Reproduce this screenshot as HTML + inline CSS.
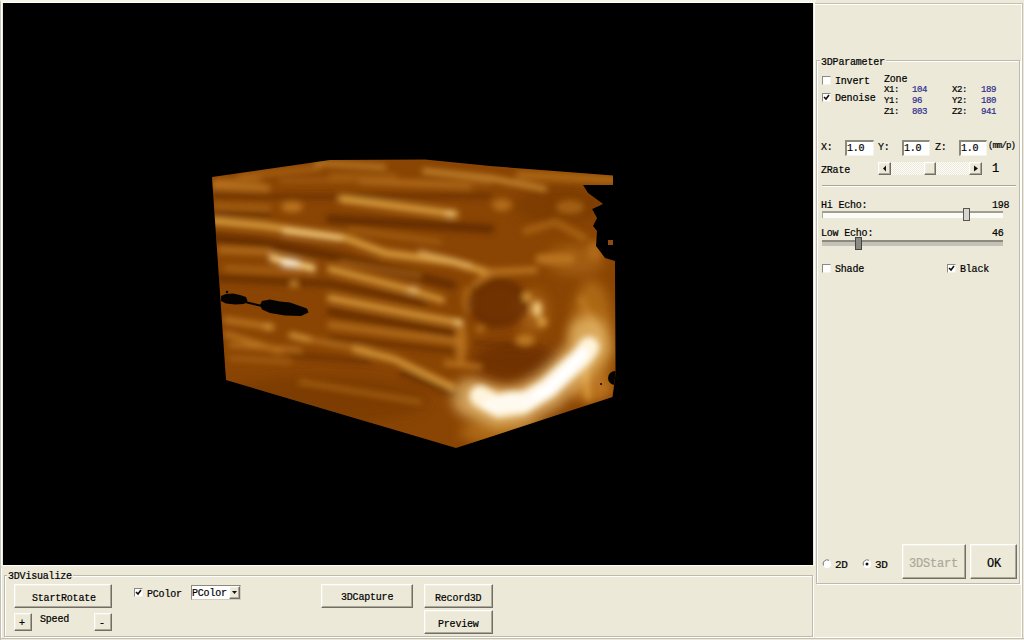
<!DOCTYPE html>
<html><head><meta charset="utf-8">
<style>
*{box-sizing:border-box}
html,body{margin:0;padding:0;width:1024px;height:640px;overflow:hidden;background:#ece9d8}
body{position:relative;font-family:"Liberation Mono",monospace;color:#000}
.t,.s{-webkit-text-stroke:0.2px currentColor}
.a{position:absolute}
.t{position:absolute;font-size:10px;line-height:10px;letter-spacing:-0.2px;white-space:pre}
.s{position:absolute;font-size:9px;line-height:9px;letter-spacing:-0.4px;white-space:pre}
.v{color:#2c2c8c}
.m{font-size:12px;line-height:12px;letter-spacing:-0.2px}
.btn{position:absolute;background:#ece9d8;border-top:1px solid #fff;border-left:1px solid #fff;border-right:1px solid #716f64;border-bottom:1px solid #716f64;box-shadow:inset -1px -1px 0 #aca899, inset 1px 1px 0 #f1efe2}
.gb{position:absolute;border:1px solid #d0d0bf;box-shadow:1px 1px 0 #fff inset,1px 1px 0 #fff}
.cb{position:absolute;width:9px;height:9px;background:#fff;border-top:1px solid #8a8a80;border-left:1px solid #8a8a80;border-right:1px solid #f4f2e8;border-bottom:1px solid #f4f2e8}
.edit{position:absolute;background:#fff;border-top:2px solid #8c8a7c;border-left:2px solid #8c8a7c;border-right:1px solid #f4f3ee;border-bottom:1px solid #f4f3ee}
.lbl{position:absolute;background:#ece9d8;padding:0 1px}
</style></head><body>

<!-- viewport -->
<div class="a" style="left:0;top:0;width:816px;height:568px;border-top:2px solid #f6f4e8;border-left:1px solid #c8c5b6"></div>
<div class="a" style="left:1px;top:2px;width:814px;height:564px;border-left:1px solid #fff;border-right:1px solid #fff;border-bottom:1px solid #fff;border-top:1px solid #fff"></div>
<div class="a" id="vp" style="left:3px;top:3px;width:810px;height:562px;background:#000;overflow:hidden">
<svg width="810" height="562" viewBox="3 3 810 562" style="position:absolute;left:0;top:0">
  <defs>
    <clipPath id="cube">
      <polygon points="212,177 330,160 425,159.5 490,166 613,175.5 613,185 583,185 588,193 603,204 592,209 597,218 593,226 597,231 596,246 605,258 615,261 615.5,374 612.5,397 456,448 226,380"/>
    </clipPath>
    <filter id="b25" x="-50%" y="-50%" width="200%" height="200%"><feGaussianBlur stdDeviation="3"/></filter>
    <filter id="b3" x="-50%" y="-50%" width="200%" height="200%"><feGaussianBlur stdDeviation="3"/></filter>
    <filter id="b6" x="-50%" y="-50%" width="200%" height="200%"><feGaussianBlur stdDeviation="6"/></filter>
  </defs>
  <g clip-path="url(#cube)">
    <rect x="200" y="150" width="430" height="310" fill="#8a4504"/>
    <g filter="url(#b6)"><ellipse cx="515" cy="362" rx="44" ry="19" fill="#5f2800" opacity="0.6"/><ellipse cx="533" cy="312" rx="16" ry="22" fill="#bc7620" opacity="0.5"/><ellipse cx="592" cy="340" rx="22" ry="60" fill="#bc7620" opacity="0.7"/><ellipse cx="592" cy="388" rx="22" ry="14" fill="#bc7620" opacity="0.9"/><ellipse cx="505" cy="432" rx="45" ry="14" fill="#bc7620" opacity="0.7"/><ellipse cx="320" cy="400" rx="110" ry="24" fill="#743502" opacity="0.6"/><ellipse cx="560" cy="205" rx="45" ry="18" fill="#743502" opacity="0.6"/><ellipse cx="575" cy="260" rx="30" ry="15" fill="#bc7620" opacity="0.5"/></g>
    <g filter="url(#b25)" stroke-linecap="round" fill="none"><path d="M316 163 L385 167" stroke="#d89c3c" stroke-width="3"/><path d="M240 176 L320 168" stroke="#bc7620" stroke-width="3"/><path d="M280 181 L350 180" stroke="#bc7620" stroke-width="2"/><path d="M214 181 L260 180" stroke="#bc7620" stroke-width="3"/><path d="M424 171 L490 178 L545 189" stroke="#d89c3c" stroke-width="4"/><path d="M330 175 L397 176" stroke="#bc7620" stroke-width="2"/><path d="M330 180 L490 183" stroke="#bc7620" stroke-width="2"/><path d="M520 175 L613 180" stroke="#bc7620" stroke-width="8" opacity="0.7"/><path d="M214 186 L267 188" stroke="#bc7620" stroke-width="6"/><path d="M214 195 L300 197 L490 196" stroke="#5f2800" stroke-width="4" opacity="0.85"/><path d="M214 213 L270 215" stroke="#5f2800" stroke-width="4" opacity="0.85"/><path d="M330 219 L490 229" stroke="#5f2800" stroke-width="9" opacity="0.85"/><path d="M214 238 L265 243 L330 255 L452 285" stroke="#5f2800" stroke-width="9" opacity="0.85"/><path d="M214 278 L330 284 L424 303" stroke="#5f2800" stroke-width="6" opacity="0.85"/><path d="M330 312 L455 334" stroke="#5f2800" stroke-width="7" opacity="0.85"/><path d="M330 338 L460 352" stroke="#5f2800" stroke-width="4" opacity="0.85"/><path d="M290 355 L370 362" stroke="#5f2800" stroke-width="4" opacity="0.85"/><path d="M402 373 L460 396" stroke="#5f2800" stroke-width="6" opacity="0.85"/><path d="M475 343 L526 347" stroke="#5f2800" stroke-width="3" opacity="0.85"/><path d="M360 182 L470 187" stroke="#bc7620" stroke-width="3"/><path d="M214 206 L270 208" stroke="#bc7620" stroke-width="3"/><path d="M350 230 L440 242" stroke="#bc7620" stroke-width="3" opacity="0.8"/><path d="M226 268 L300 272" stroke="#bc7620" stroke-width="3"/><path d="M340 262 L420 276" stroke="#bc7620" stroke-width="3" opacity="0.8"/><path d="M230 345 L300 350" stroke="#bc7620" stroke-width="4"/><path d="M300 382 L420 402" stroke="#bc7620" stroke-width="4" opacity="0.7"/><path d="M230 358 L290 362" stroke="#bc7620" stroke-width="3" opacity="0.8"/><ellipse cx="292" cy="207" rx="11" ry="5" fill="#bc7620"/><path d="M342 199 L455 214" stroke="#d89c3c" stroke-width="7"/><path d="M214 221 L265 226 L345 238 L385 253 L452 262 L490 273" stroke="#d89c3c" stroke-width="7"/><path d="M285 231 L340 238" stroke="#f0c87c" stroke-width="6"/><path d="M420 252 L470 265" stroke="#f0c87c" stroke-width="4" opacity="0.7"/><path d="M220 250 L270 252" stroke="#bc7620" stroke-width="5"/><path d="M330 269 L411 290 L442 300" stroke="#d89c3c" stroke-width="6"/><ellipse cx="294" cy="284" rx="3" ry="3" fill="#d89c3c"/><path d="M330 298 L417 315 L461 323" stroke="#d89c3c" stroke-width="6"/><path d="M330 325 L460 342" stroke="#bc7620" stroke-width="5"/><path d="M226 320 L272 327" stroke="#bc7620" stroke-width="6"/><path d="M226 334 L280 351" stroke="#bc7620" stroke-width="5"/><path d="M291 335 L311 340" stroke="#d89c3c" stroke-width="5"/><path d="M311 340 L370 351" stroke="#bc7620" stroke-width="4"/><path d="M355 349 L394 359 L452 387" stroke="#d89c3c" stroke-width="6"/><path d="M446 363 L480 367" stroke="#bc7620" stroke-width="5"/><ellipse cx="468" cy="300" rx="6" ry="14" fill="#bc7620" opacity="0.6"/><ellipse cx="461" cy="342" rx="6" ry="22" fill="#bc7620" opacity="0.8"/><path d="M475 285 L490 272 L535 270" stroke="#bc7620" stroke-width="6"/><path d="M526 231 L556 222 L584 238" stroke="#bc7620" stroke-width="7" opacity="0.6"/><path d="M540 259 L570 259" stroke="#bc7620" stroke-width="9"/><path d="M582 300 L600 340" stroke="#bc7620" stroke-width="7"/><path d="M585 370 L588 398" stroke="#d89c3c" stroke-width="5"/><ellipse cx="525" cy="340" rx="10" ry="6" fill="#bc7620"/><ellipse cx="502" cy="205" rx="10" ry="6" fill="#bc7620" opacity="0.8"/><ellipse cx="570" cy="207" rx="14" ry="7" fill="#bc7620" opacity="0.6"/><ellipse cx="595" cy="250" rx="8" ry="10" fill="#bc7620" opacity="0.6"/><ellipse cx="498" cy="303" rx="31" ry="26" fill="#5f2800" opacity="0.6"/><ellipse cx="498" cy="303" rx="24" ry="19" fill="none" stroke="#5f2800" stroke-width="2" opacity="0.5"/><ellipse cx="542" cy="322" rx="5" ry="5" fill="#d89c3c"/><ellipse cx="480" cy="329" rx="4" ry="3" fill="#bc7620"/><ellipse cx="537" cy="309" rx="5" ry="8" fill="#f0c87c"/><ellipse cx="527" cy="297" rx="4" ry="4" fill="#d89c3c"/><ellipse cx="413" cy="290" rx="6" ry="3" fill="#f0c87c"/><ellipse cx="458" cy="322" rx="5" ry="3" fill="#f0c87c"/><ellipse cx="450" cy="214" rx="5" ry="3" fill="#f0c87c"/><ellipse cx="268" cy="327" rx="4" ry="3" fill="#d89c3c"/><path d="M273 258 L312 268" stroke="#f0c87c" stroke-width="8"/><ellipse cx="290" cy="263" rx="10" ry="4" fill="#fff5dc"/></g>
    <g filter="url(#b6)" stroke-linecap="round" fill="none"><ellipse cx="500" cy="402" rx="30" ry="14" fill="#f0c87c" opacity="0.6"/><path d="M472 398 L499 408 L522 405 L548 390 L566 373 L582 358 L590 346 L588 336" stroke="#f0c87c" stroke-width="40" opacity="0.65"/></g>
    <g filter="url(#b3)" stroke-linecap="round" fill="none"><path d="M480 396 L499 407 L522 404 L548 388 L566 371 L582 357 L589 347" stroke="#fff5dc" stroke-width="21"/><path d="M490 405 L525 403 L550 388 L570 368 L582 354" stroke="#ffffff" stroke-width="12"/><ellipse cx="510" cy="401" rx="24" ry="9" fill="#fffaf0" transform="rotate(-8 510 401)"/></g>
    <g fill="#050302">
      <path d="M221 296 L226 294 L233 293.5 L240 295 L246 297 L247.5 301 L244 304 L235 304.5 L226 303.5 L221 301Z"/><path d="M262 301 L270 299.5 L280 301.5 L290 302.5 L300 306 L307 308.5 L308.5 312.5 L301 316 L285 315.5 L270 313 L262 309.5 L260 305Z"/><path d="M245 302 L262 306" stroke="#050302" stroke-width="1.8" fill="none"/>
      <circle cx="227" cy="292" r="1.3"/>
      <circle cx="615" cy="378" r="7"/>
      <circle cx="601" cy="384" r="1"/>
    </g>
  </g>
  <rect x="608" y="240" width="5" height="5" fill="#8a4a18"/>
</svg>
</div>

<!-- right panel frame -->
<div class="a" style="left:815px;top:3px;width:208px;height:636px;border-top:1px solid #c4c1b2;border-right:1px solid #c4c1b2;border-bottom:1px solid #c4c1b2;box-shadow:inset 0 1px 0 #fff,inset -1px -1px 0 #fff"></div>

<!-- 3DParameter group -->
<div class="a" style="left:817px;top:61px;width:204px;height:524px;border:1px solid #fff"></div>
<div class="a" style="left:816px;top:60px;width:204px;height:524px;border:1px solid #bdbaab"></div>
<div class="t lbl" style="left:820px;top:58px">3DParameter</div>

<div class="cb" style="left:822px;top:76px"></div>
<div class="t" style="left:835px;top:77px">Invert</div>
<div class="cb" style="left:822px;top:93px"></div>
<div class="t" style="left:822px;top:92px;font-size:10px">&nbsp;</div>
<svg class="a" style="left:822px;top:93px" width="9" height="9"><path d="M2 4 L4 6 L7 2" stroke="#111" stroke-width="1.6" fill="none"/></svg>
<div class="t" style="left:835px;top:94px">Denoise</div>

<div class="t" style="left:884px;top:75px">Zone</div>
<div class="s" style="left:884px;top:86px">X1:</div><div class="s v" style="left:912px;top:86px">104</div>
<div class="s" style="left:952px;top:86px">X2:</div><div class="s v" style="left:981px;top:86px">189</div>
<div class="s" style="left:884px;top:97px">Y1:</div><div class="s v" style="left:912px;top:97px">96</div>
<div class="s" style="left:952px;top:97px">Y2:</div><div class="s v" style="left:981px;top:97px">180</div>
<div class="s" style="left:884px;top:108px">Z1:</div><div class="s v" style="left:912px;top:108px">803</div>
<div class="s" style="left:952px;top:108px">Z2:</div><div class="s v" style="left:981px;top:108px">941</div>

<div class="t" style="left:821px;top:143px">X:</div>
<div class="edit" style="left:845px;top:140px;width:29px;height:16px"></div>
<div class="t" style="left:847px;top:144px">1.0</div>
<div class="t" style="left:878px;top:143px">Y:</div>
<div class="edit" style="left:902px;top:140px;width:28px;height:16px"></div>
<div class="t" style="left:904px;top:144px">1.0</div>
<div class="t" style="left:935px;top:143px">Z:</div>
<div class="edit" style="left:959px;top:140px;width:28px;height:16px"></div>
<div class="t" style="left:961px;top:144px">1.0</div>
<div class="s" style="left:988px;top:142px;letter-spacing:-0.9px">(mm/p)</div>

<div class="t" style="left:821px;top:166px">ZRate</div>
<div class="a" style="left:878px;top:162px;width:104px;height:13px;background:repeating-conic-gradient(#fdfdfb 0 25%,#ece9d8 0 50%) 0 0/2px 2px"></div>
<div class="btn" style="left:878px;top:162px;width:13px;height:13px"></div>
<div class="btn" style="left:924px;top:162px;width:12px;height:13px"></div>
<div class="btn" style="left:969px;top:162px;width:13px;height:13px"></div>
<svg class="a" style="left:878px;top:162px" width="104" height="13"><path d="M5 6.5 L8 3.5 L8 9.5Z M100 6.5 L96 3.5 L96 9.5Z" fill="#111"/></svg>
<div class="t m" style="left:992px;top:163px">1</div>

<div class="a" style="left:822px;top:185px;width:194px;height:2px;border-top:1px solid #aca899;border-bottom:1px solid #fff"></div>

<div class="t" style="left:821px;top:201px">Hi Echo:</div>
<div class="t" style="left:992px;top:201px">198</div>
<div class="a" style="left:822px;top:211px;width:181px;height:7px;background:#fbfbf8;border-top:2px solid #a09e90;border-left:1px solid #aca899"></div>
<div class="a" style="left:963px;top:208px;width:7px;height:13px;background:#d8d6cc;border:1px solid #555"></div>

<div class="t" style="left:821px;top:229px">Low Echo:</div>
<div class="t" style="left:992px;top:229px">46</div>
<div class="a" style="left:822px;top:240px;width:181px;height:6px;background:#c4c2b8;border-top:2px solid #8c8a7c"></div>
<div class="a" style="left:855px;top:237px;width:7px;height:13px;background:#8c8a84;border:1px solid #444"></div>

<div class="cb" style="left:822px;top:264px"></div>
<div class="t" style="left:835px;top:265px">Shade</div>
<div class="cb" style="left:947px;top:264px"></div>
<svg class="a" style="left:947px;top:264px" width="9" height="9"><path d="M2 4 L4 6 L7 2" stroke="#111" stroke-width="1.6" fill="none"/></svg>
<div class="t" style="left:960px;top:265px">Black</div>

<!-- radios -->
<svg class="a" style="left:822px;top:559px" width="10" height="10"><circle cx="5" cy="5" r="4" fill="#fff"/><path d="M1.5 6.5 A4 4 0 0 1 7 1.3" stroke="#777" stroke-width="1" fill="none"/></svg>
<div class="t m" style="left:835px;top:559px;font-size:11px;letter-spacing:-0.4px">2D</div>
<svg class="a" style="left:862px;top:559px" width="10" height="10"><circle cx="5" cy="5" r="4" fill="#fff"/><path d="M1.5 6.5 A4 4 0 0 1 7 1.3" stroke="#777" stroke-width="1" fill="none"/><circle cx="5" cy="5" r="1.5" fill="#111"/></svg>
<div class="t m" style="left:875px;top:559px;font-size:11px;letter-spacing:-0.4px">3D</div>

<div class="btn" style="left:902px;top:544px;width:64px;height:35px"></div>
<div class="t m" style="left:909px;top:558px;color:#aca899">3DStart</div>
<div class="btn" style="left:970px;top:544px;width:47px;height:35px"></div>
<div class="t m" style="left:987px;top:558px">OK</div>

<!-- bottom panel -->
<div class="a" style="left:0;top:638px;width:1024px;height:2px;border-top:1px solid #c4c1b2;background:#ece9d8"></div>
<div class="a" style="left:0;top:568px;width:1px;height:72px;background:#c4c1b2"></div><div class="a" style="left:1px;top:568px;width:1px;height:70px;background:#fff"></div>
<div class="a" style="left:5px;top:576px;width:809px;height:62px;border:1px solid #fff"></div>
<div class="a" style="left:4px;top:575px;width:809px;height:62px;border:1px solid #bdbaab"></div>
<div class="t lbl" style="left:7px;top:572px">3DVisualize</div>

<div class="btn" style="left:14px;top:584px;width:98px;height:24px"></div>
<div class="t" style="left:32px;top:594px">StartRotate</div>
<div class="btn" style="left:14px;top:613px;width:18px;height:18px"></div>
<div class="t" style="left:19px;top:619px">+</div>
<div class="t" style="left:40px;top:615px">Speed</div>
<div class="btn" style="left:94px;top:613px;width:18px;height:18px"></div>
<div class="t" style="left:99px;top:619px">-</div>

<div class="cb" style="left:134px;top:588px"></div>
<svg class="a" style="left:134px;top:588px" width="9" height="9"><path d="M2 4 L4 6 L7 2" stroke="#111" stroke-width="1.6" fill="none"/></svg>
<div class="t" style="left:147px;top:590px">PColor</div>
<div class="a" style="left:191px;top:585px;width:50px;height:15px;background:#fff;border-top:1px solid #8c8a7c;border-left:1px solid #8c8a7c;border-right:1px solid #d0cdbd;border-bottom:1px solid #d0cdbd"></div>
<div class="t" style="left:192px;top:589px">PColor</div>
<div class="btn" style="left:229px;top:586px;width:11px;height:13px"></div>
<svg class="a" style="left:229px;top:586px" width="11" height="13"><path d="M3 5 L8 5 L5.5 8Z" fill="#111"/></svg>

<div class="btn" style="left:321px;top:584px;width:92px;height:24px"></div>
<div class="t" style="left:341px;top:593px">3DCapture</div>
<div class="btn" style="left:424px;top:584px;width:69px;height:24px"></div>
<div class="t" style="left:435px;top:594px">Record3D</div>
<div class="btn" style="left:424px;top:610px;width:69px;height:24px"></div>
<div class="t" style="left:438px;top:620px">Preview</div>

</body></html>
